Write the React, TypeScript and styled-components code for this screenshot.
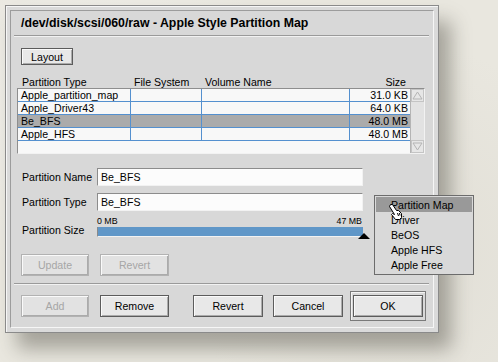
import React from 'react'
import styled, { createGlobalStyle } from 'styled-components'

const GlobalStyle = createGlobalStyle`
  html, body {
    margin: 0;
    padding: 0;
  }
  body {
    background: #e9e7df;
    font-family: 'Liberation Sans', Arial, sans-serif;
    color: #000;
  }
`

const Page = styled.div`
  width: 498px;
  height: 362px;
  box-sizing: border-box;
  padding: 5px;
  background:
    radial-gradient(circle at 20% 30%, rgba(255, 255, 255, 0.35), transparent 40%),
    radial-gradient(circle at 80% 70%, rgba(200, 196, 186, 0.25), transparent 45%),
    #e9e7df;
`

const Window = styled.div`
  position: relative;
  width: 434px;
  height: 328px;
  box-sizing: border-box;
  border: 1px solid #8a8a8a;
  padding: 4px;
  background: #dadada;
  box-shadow: inset 1px 1px 0 #f6f6f6, 12px 16px 18px rgba(66, 62, 52, 0.4);
`

const Inner = styled.div`
  height: 100%;
  box-sizing: border-box;
  display: flex;
  flex-direction: column;
  border: 1px solid;
  border-color: #9c9c9c #f6f6f6 #f6f6f6 #9c9c9c;
  background: #d8d8d8;
`

const Title = styled.div`
  height: 24px;
  padding-left: 10px;
  display: flex;
  align-items: center;
  font-size: 12.3px;
  font-weight: bold;
`

const Separator = styled.div`
  margin: 0 4px 0 3px;
  border-top: 1px solid #9a9a9a;
  border-bottom: 1px solid #f2f2f2;
`

const Body = styled.div`
  display: flex;
  flex-direction: column;
  padding: 0 8px 0 6px;
`

const Button = styled.button<{ $disabled?: boolean; $width?: number; $ml?: number }>`
  width: ${(p) => p.$width ?? 69}px;
  height: 22px;
  margin-left: ${(p) => p.$ml ?? 0}px;
  padding: 0;
  box-sizing: border-box;
  font-family: inherit;
  font-size: 10.6px;
  color: ${(p) => (p.$disabled ? '#a6a6a6' : '#000')};
  background: ${(p) => (p.$disabled ? '#e2e2e2' : '#e8e8e8')};
  border: 1px solid ${(p) => (p.$disabled ? '#b2b2b2' : '#5c5c5c')};
  box-shadow: inset 1px 1px 0 #fafafa, inset -1px -1px 0 #ababab;
`

const SmallButton = styled(Button)`
  height: 17px;
  width: 52px;
  margin: 11px 0 0 4px;
  align-self: flex-start;
`

const Grid = styled.div`
  display: grid;
  grid-template-columns: 113px 71px 148px 60px;
`

const HeaderRow = styled(Grid)`
  margin: 11px 0 0 1px;
  height: 12px;
  font-size: 10.6px;
  line-height: 12px;
`

const HeaderCell = styled.div<{ $right?: boolean }>`
  padding: ${(p) => (p.$right ? '0 4px 0 0' : '0 0 0 4px')};
  text-align: ${(p) => (p.$right ? 'right' : 'left')};
`

const ListBox = styled.div`
  height: 66px;
  box-sizing: border-box;
  display: flex;
  border: 1px solid;
  border-color: #8e8e8e #f2f2f2 #f2f2f2 #8e8e8e;
  background: #f8f8f8;
`

const Rows = styled.div`
  flex: 1;
`

const Row = styled(Grid)<{ $selected?: boolean }>`
  height: 13px;
  box-sizing: border-box;
  border-bottom: 1px solid #5490cf;
  background: ${(p) => (p.$selected ? '#ababab' : 'transparent')};
  font-size: 10.6px;
  line-height: 12px;
`

const Cell = styled.div<{ $right?: boolean; $last?: boolean }>`
  padding: ${(p) => (p.$right ? '0 2px 0 0' : '0 0 0 3px')};
  text-align: ${(p) => (p.$right ? 'right' : 'left')};
  border-right: ${(p) => (p.$last ? 'none' : '1px solid #5490cf')};
  white-space: nowrap;
  overflow: hidden;
`

const ScrollBar = styled.div`
  width: 14px;
  display: flex;
  flex-direction: column;
  justify-content: space-between;
  background: #e2e2e2;
  border-left: 1px solid #b4b4b4;
`

const ScrollArrow = styled.div`
  height: 13px;
  display: flex;
  align-items: center;
  justify-content: center;
  background: #e6e6e6;
  border: 1px solid #c4c4c4;
  box-sizing: border-box;
`

const FieldRow = styled.div<{ $mt: number }>`
  display: flex;
  align-items: center;
  margin: ${(p) => p.$mt}px 0 0 5px;
`

const Label = styled.div`
  width: 75px;
  font-size: 10.6px;
`

const TextField = styled.div`
  width: 266px;
  height: 18px;
  box-sizing: border-box;
  padding-left: 3px;
  display: flex;
  align-items: center;
  font-size: 10.6px;
  background: #fcfcfc;
  border: 1px solid;
  border-color: #8c8c8c #f2f2f2 #f2f2f2 #8c8c8c;
`

const SizeRow = styled.div`
  display: flex;
  align-items: flex-end;
  margin: 5px 0 0 5px;
`

const SizeLabel = styled(Label)`
  line-height: 14px;
`

const Slider = styled.div`
  width: 266px;
  display: flex;
  flex-direction: column;
`

const SliderLabels = styled.div`
  display: flex;
  justify-content: space-between;
  height: 11px;
  font-size: 8.8px;
  line-height: 10px;
  padding-right: 1px;
`

const Bar = styled.div`
  position: relative;
  height: 10px;
  box-sizing: border-box;
  background: #6097c8;
  border-left: 1px solid #8a8a8a;
  border-bottom: 1px solid #f2f2f2;
`

const Thumb = styled.div`
  position: absolute;
  right: -7px;
  top: 6px;
  width: 0;
  height: 0;
  border-left: 6px solid transparent;
  border-right: 6px solid transparent;
  border-bottom: 6px solid #000;
`

const ButtonRow = styled.div`
  display: flex;
  margin: 17px 0 0 4px;
`

const Footer = styled.div`
  display: flex;
  align-items: center;
  padding: 6px 0 0 10px;
`

const DefaultFrame = styled.div<{ $ml: number }>`
  margin-left: ${(p) => p.$ml}px;
  padding: 3px 2px;
  border: 1px solid #7a7a7a;
  box-shadow: inset 1px 1px 0 #f4f4f4;
  background: #d8d8d8;
`

const Popup = styled.div`
  position: absolute;
  left: 368px;
  top: 189px;
  width: 100px;
  box-sizing: border-box;
  padding: 1px 1px 2px;
  background: #d9d9d9;
  border: 1px solid #6c6c6c;
  z-index: 2;
`

const MenuItem = styled.div<{ $active?: boolean }>`
  height: 15px;
  padding-left: 15px;
  font-size: 10.6px;
  line-height: 16px;
  background: ${(p) => (p.$active ? '#999999' : 'transparent')};
`

const Cursor = styled.svg`
  position: absolute;
  left: 382px;
  top: 197px;
  z-index: 3;
`

interface Partition {
  type: string
  size: string
}

const partitions: Partition[] = [
  { type: 'Apple_partition_map', size: '31.0 KB' },
  { type: 'Apple_Driver43', size: '64.0 KB' },
  { type: 'Be_BFS', size: '48.0 MB' },
  { type: 'Apple_HFS', size: '48.0 MB' }
]

const menuItems: string[] = ['Partition Map', 'Driver', 'BeOS', 'Apple HFS', 'Apple Free']

const Arrow = ({ up }: { up?: boolean }): JSX.Element => (
  <svg width="11" height="9" viewBox="0 0 11 9">
    <path
      d={up ? 'M5.5 1 L10 8 L1 8 Z' : 'M1 1 L10 1 L5.5 8 Z'}
      fill="none"
      stroke="#b4b4b4"
      strokeWidth="1"
    />
  </svg>
)

export default function App(): JSX.Element {
  return (
    <>
      <GlobalStyle />
      <Page>
        <Window>
          <Inner>
            <Title>/dev/disk/scsi/060/raw - Apple Style Partition Map</Title>
            <Separator />
            <Body>
              <SmallButton>Layout</SmallButton>
              <HeaderRow>
                <HeaderCell>Partition Type</HeaderCell>
                <HeaderCell style={{ paddingLeft: 3 }}>File System</HeaderCell>
                <HeaderCell style={{ paddingLeft: 3 }}>Volume Name</HeaderCell>
                <HeaderCell $right>Size</HeaderCell>
              </HeaderRow>
              <ListBox>
                <Rows>
                  {partitions.map((p) => (
                    <Row key={p.type} $selected={p.type === 'Be_BFS'}>
                      <Cell>{p.type}</Cell>
                      <Cell />
                      <Cell />
                      <Cell $right $last>
                        {p.size}
                      </Cell>
                    </Row>
                  ))}
                </Rows>
                <ScrollBar>
                  <ScrollArrow>
                    <Arrow up />
                  </ScrollArrow>
                  <ScrollArrow>
                    <Arrow />
                  </ScrollArrow>
                </ScrollBar>
              </ListBox>
              <FieldRow $mt={14}>
                <Label>Partition Name</Label>
                <TextField>Be_BFS</TextField>
              </FieldRow>
              <FieldRow $mt={7}>
                <Label>Partition Type</Label>
                <TextField>Be_BFS</TextField>
              </FieldRow>
              <SizeRow>
                <SizeLabel>Partition Size</SizeLabel>
                <Slider>
                  <SliderLabels>
                    <span>0 MB</span>
                    <span>47 MB</span>
                  </SliderLabels>
                  <Bar>
                    <Thumb />
                  </Bar>
                </Slider>
              </SizeRow>
              <ButtonRow>
                <Button $disabled $width={68}>
                  Update
                </Button>
                <Button $disabled $ml={11}>
                  Revert
                </Button>
              </ButtonRow>
            </Body>
            <Separator style={{ marginTop: 7 }} />
            <Footer>
              <Button $disabled $width={68}>
                Add
              </Button>
              <Button $ml={11}>Remove</Button>
              <Button $ml={24} $width={70}>
                Revert
              </Button>
              <Button $ml={10} $width={70}>
                Cancel
              </Button>
              <DefaultFrame $ml={7}>
                <Button $width={70}>OK</Button>
              </DefaultFrame>
            </Footer>
          </Inner>
          <Popup>
            {menuItems.map((item, i) => (
              <MenuItem key={item} $active={i === 0}>
                {item}
              </MenuItem>
            ))}
          </Popup>
          <Cursor width="16" height="18" viewBox="0 0 16 18">
            <path
              d="M2.5 1.5 L4.5 1.5 L8.5 7.5 L10.5 7.5 L13.5 10.5 L13.5 14.5 L11.5 16.5 L7.5 16.5 L3.5 11.5 L4.5 10.5 L6.5 11.5 L1.5 3.5 Z"
              fill="#fff"
              stroke="#000"
              strokeWidth="1"
            />
            <path d="M9.5 10 L10.5 13 M11.5 10 L12 12.5" stroke="#000" strokeWidth="1" fill="none" />
          </Cursor>
        </Window>
      </Page>
    </>
  )
}
